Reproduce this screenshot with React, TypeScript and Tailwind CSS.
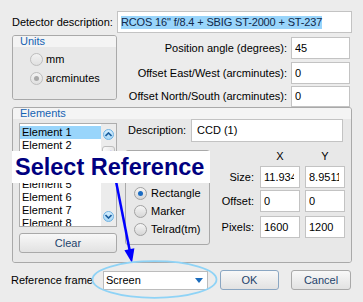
import React from "react";

function Radio({ checked = false, disabled = false }: { checked?: boolean; disabled?: boolean }) {
  return (
    <span
      className={
        "w-[13px] h-[13px] rounded-full border flex items-center justify-center shrink-0 bg-linear-to-b " +
        (disabled
          ? "border-[#bdbdbd] from-[#f2f2f2] to-[#e0e0e0]"
          : "border-[#a2a2a2] from-[#f6f6f6] to-[#d6d6d6]")
      }
    >
      {checked && (
        <span
          className={
            "w-[5px] h-[5px] rounded-full " + (disabled ? "bg-[#a9a9a9]" : "bg-[#1a6bc2]")
          }
        />
      )}
    </span>
  );
}

function Field({ value, className = "" }: { value: string; className?: string }) {
  return (
    <div className={"bg-white border border-[#c3c3c3] flex items-center pl-[3px] pr-[5px] " + className}>
      <div className="overflow-hidden whitespace-nowrap w-full leading-[13px]">{value}</div>
    </div>
  );
}

function ScrollBtn({ up }: { up: boolean }) {
  return (
    <span className="w-[11px] h-[11px] rounded-full border border-[#6fb3e3] bg-linear-to-b from-[#d6efff] to-[#a9d8f7] flex items-center justify-center">
      <svg width="7" height="5" viewBox="0 0 7 5">
        {up ? (
          <path d="M0.5 4 L3.5 1 L6.5 4" fill="none" stroke="#1c5d9c" strokeWidth="1.6" />
        ) : (
          <path d="M0.5 1 L3.5 4 L6.5 1" fill="none" stroke="#1c5d9c" strokeWidth="1.6" />
        )}
      </svg>
    </span>
  );
}

export default function App() {
  const elements = ["Element 1", "Element 2", "Element 3", "Element 4", "Element 5", "Element 6", "Element 7", "Element 8"];
  return (
    <div className="relative w-[363px] h-[302px] overflow-hidden bg-[#ececec] text-[11px] text-black font-['Liberation_Sans',Arial,sans-serif]">
      <div className="flex flex-col pl-[12px] pr-[11px] pt-[11px]">
        {/* Detector description */}
        <div className="flex items-center h-[22px]">
          <span className="w-[105px] whitespace-nowrap">Detector description:</span>
          <div className="flex-1 h-[22px] bg-white border border-[#c3c3c3] flex items-center pl-[3px]">
            <span className="bg-[#99d5fb] leading-[13px] whitespace-nowrap text-[#10284a] tracking-[-0.15px]">
              RCOS 16" f/8.4 + SBIG ST-2000 + ST-237
            </span>
          </div>
        </div>

        {/* Units + offsets */}
        <div className="flex mt-[2px]">
          <div className="w-[105px] h-[65px] border border-[#a9a9a9] rounded-[3px] overflow-hidden flex flex-col">
            <div className="h-[11px] leading-[11px] bg-[#f4f4f4] text-[#1463b3] pl-[7px]">Units</div>
            <div className="flex-1 bg-[#e8e8e8] flex flex-col pl-[17px] pt-[6px] gap-[6px]">
              <div className="flex items-center h-[13px] gap-[3px]">
                <Radio disabled />
                <span>mm</span>
              </div>
              <div className="flex items-center h-[13px] gap-[3px]">
                <Radio disabled checked />
                <span>arcminutes</span>
              </div>
            </div>
          </div>
          <div className="flex-1 flex flex-col items-end pr-[2px]">
            <div className="flex items-center mt-[2px] h-[22px]">
              <span className="mr-[4px] whitespace-nowrap">Position angle (degrees):</span>
              <Field value="45" className="w-[59px] h-[22px]" />
            </div>
            <div className="flex items-center mt-[3px] h-[22px]">
              <span className="mr-[4px] whitespace-nowrap">Offset East/West (arcminutes):</span>
              <Field value="0" className="w-[59px] h-[22px]" />
            </div>
            <div className="flex items-center mt-[2px] h-[21px]">
              <span className="mr-[4px] whitespace-nowrap">Offset North/South (arcminutes):</span>
              <Field value="0" className="w-[59px] h-[21px]" />
            </div>
          </div>
        </div>

        {/* Elements group */}
        <div className="h-[156px] border border-[#a9a9a9] rounded-[3px] overflow-hidden flex flex-col">
          <div className="h-[11px] leading-[11px] bg-[#f4f4f4] text-[#1463b3] pl-[7px]">Elements</div>
          <div className="flex-1 bg-[#e8e8e8] flex items-start pl-[6px]">
            {/* list + clear */}
            <div className="w-[98px] mt-[4px] flex flex-col">
              <div className="h-[104px] bg-white border border-[#adadad] flex overflow-hidden">
                <div className="flex-1 pt-[2px] flex flex-col">
                  {elements.map((e, i) => (
                    <div
                      key={e}
                      className={"h-[13px] leading-[13px] pl-[2px] whitespace-nowrap shrink-0 " + (i === 0 ? "bg-[#99d5fb]" : "")}
                    >
                      {e}
                    </div>
                  ))}
                </div>
                <div className="w-[15px] bg-[#ececec] flex flex-col items-center pt-[5px] pb-[4px]">
                  <ScrollBtn up />
                  <div className="mt-[6px] w-[13px] h-[20px] rounded-[3px] border border-[#bdbdbd] bg-linear-to-r from-[#fbfbfb] to-[#e6e6e6]" />
                  <div className="flex-1" />
                  <ScrollBtn up={false} />
                </div>
              </div>
              <div className="mt-[6px] h-[20px] rounded-[3px] border border-[#a9a9a9] bg-linear-to-b from-[#f8f8f8] to-[#e2e2e2] flex items-center justify-center text-[#24436b]">
                Clear
              </div>
            </div>

            {/* right part */}
            <div className="ml-[11px] flex flex-col">
              <div className="flex items-center h-[23px]">
                <span className="w-[63px] whitespace-nowrap">Description:</span>
                <div className="w-[152px] h-[23px] bg-white border border-[#c3c3c3] flex items-center pl-[5px]">CCD (1)</div>
              </div>
              <div className="flex mt-[8px]">
                <div className="-ml-[3px] w-[85px] h-[95px] border border-[#a9a9a9] rounded-[3px] bg-[#e8e8e8] flex flex-col pl-[8px] pt-[36px] gap-[5px]">
                  <div className="flex items-center h-[13px] gap-[4px]">
                    <Radio checked />
                    <span>Rectangle</span>
                  </div>
                  <div className="flex items-center h-[13px] gap-[4px]">
                    <Radio />
                    <span>Marker</span>
                  </div>
                  <div className="flex items-center h-[13px] gap-[4px]">
                    <Radio />
                    <span>Telrad(tm)</span>
                  </div>
                </div>
                <div className="flex flex-col">
                  <div className="flex h-[12px] leading-[12px]">
                    <span className="w-[44px]" />
                    <span className="ml-[6px] w-[40px] text-center">X</span>
                    <span className="ml-[5px] w-[40px] text-center">Y</span>
                  </div>
                  <div className="flex items-center h-[22px] mt-[4px]">
                    <span className="w-[44px] text-right">Size:</span>
                    <Field value="11.934" className="ml-[6px] w-[40px] h-[22px]" />
                    <Field value="8.9511" className="ml-[5px] w-[40px] h-[22px]" />
                  </div>
                  <div className="flex items-center h-[22px] mt-[2px]">
                    <span className="w-[44px] text-right">Offset:</span>
                    <Field value="0" className="ml-[6px] w-[40px] h-[22px]" />
                    <Field value="0" className="ml-[5px] w-[40px] h-[22px]" />
                  </div>
                  <div className="flex items-center h-[22px] mt-[4px]">
                    <span className="w-[44px] text-right">Pixels:</span>
                    <Field value="1600" className="ml-[6px] w-[40px] h-[22px]" />
                    <Field value="1200" className="ml-[5px] w-[40px] h-[22px]" />
                  </div>
                </div>
              </div>
            </div>
          </div>
        </div>

        {/* Bottom row */}
        <div className="flex items-center h-[20px] mt-[7px]">
          <span className="-ml-[1px] w-[92px] whitespace-nowrap">Reference frame</span>
          <div className="w-[105px] h-[19px] bg-white border border-[#bcbcbc] flex items-center pl-[2px] pr-[4px]">
            <span className="flex-1">Screen</span>
            <svg width="8" height="5" viewBox="0 0 8 5">
              <path d="M0 0 L8 0 L4 5 Z" fill="#1b6cbd" />
            </svg>
          </div>
          <div className="ml-[12px] w-[59px] h-[20px] rounded-[3px] border border-[#8aa6c2] bg-linear-to-b from-[#f8f8f8] to-[#e2e2e2] flex items-center justify-center text-[#24436b]">
            OK
          </div>
          <div className="ml-[12px] w-[60px] h-[20px] rounded-[3px] border border-[#a9a9a9] bg-linear-to-b from-[#f8f8f8] to-[#e2e2e2] flex items-center justify-center text-[#24436b]">
            Cancel
          </div>
        </div>
      </div>

      {/* Annotation arrow */}
      <svg className="absolute left-0 top-0 pointer-events-none" width="363" height="302" viewBox="0 0 363 302">
        <line x1="110" y1="151" x2="129.6" y2="250" stroke="#0000ff" strokeWidth="2.5" />
        <polygon points="124.4,250.3 134.4,248.3 132,263" fill="#0000ff" />
      </svg>

      {/* Annotation label */}
      <div className="absolute left-[12px] top-[151px] w-[198px] h-[32px] bg-white pl-[3px] text-[23.5px] leading-[32px] font-bold text-[#000080] whitespace-nowrap">
        Select Reference
      </div>

      {/* Annotation ellipse */}
      <svg className="absolute left-0 top-0 pointer-events-none" width="363" height="302" viewBox="0 0 363 302">
        <ellipse cx="154.5" cy="279.5" rx="62" ry="18.3" fill="none" stroke="#8fd3f6" strokeWidth="1.8" />
      </svg>
    </div>
  );
}
